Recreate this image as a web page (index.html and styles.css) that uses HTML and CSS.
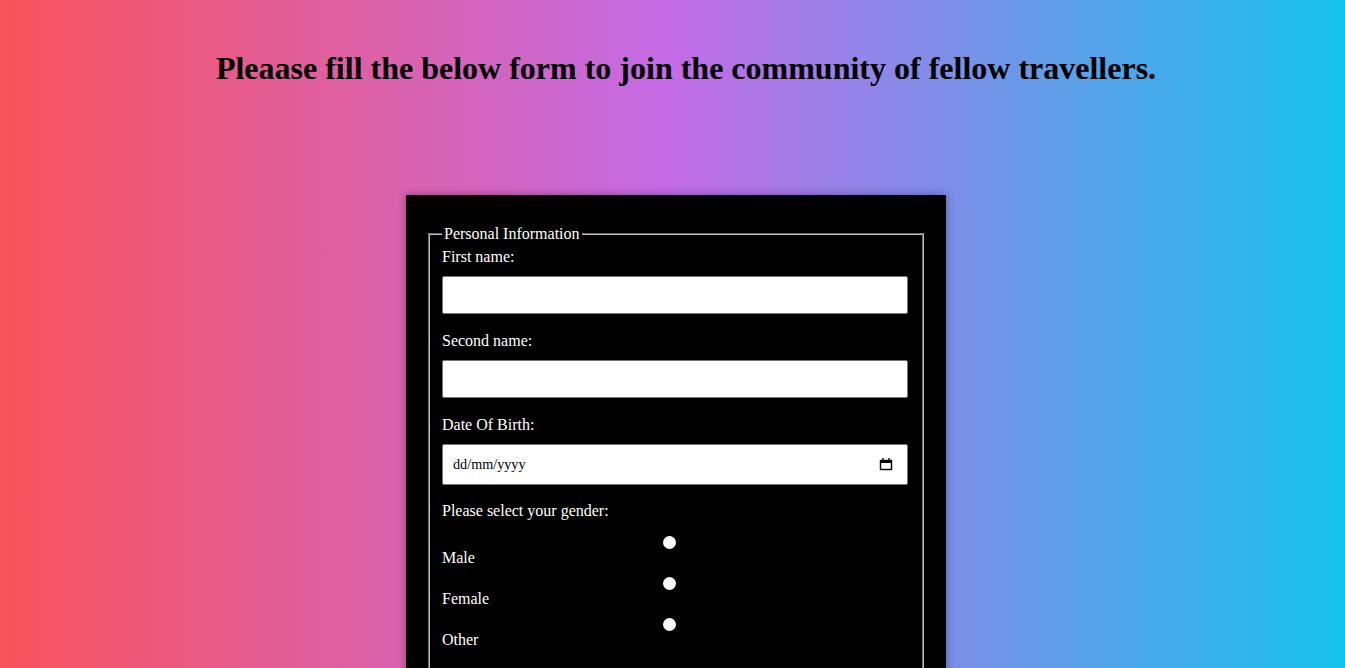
FILE: index.html
```html
<!DOCTYPE html>
<html lang="en-GB">
<head>
<meta charset="utf-8">
<title>Join the community</title>
<link rel="stylesheet" href="styles.css">
</head>
<body>
  <h1 class="title">Pleaase fill the below form to join the community of fellow travellers.</h1>
  <div class="wrap">
    <form class="form">
      <fieldset class="group">
        <legend class="legend">Personal Information</legend>
        <label class="lbl" for="fn">First name:</label>
        <input class="field" type="text" id="fn">
        <label class="lbl" for="sn">Second name:</label>
        <input class="field" type="text" id="sn">
        <label class="lbl" for="dob">Date Of Birth:</label>
        <div class="date-box">
          <input class="date-input" type="text" id="dob" placeholder="dd/mm/yyyy">
          <svg class="cal" width="14" height="14" viewBox="0 0 14 14" aria-hidden="true">
            <rect x="1.5" y="3.5" width="11" height="9" fill="none" stroke="#000" stroke-width="1.4"/>
            <rect x="1" y="3" width="12" height="3" fill="#000"/>
            <rect x="3.3" y="1" width="1.4" height="2.5" fill="#000"/>
            <rect x="9.3" y="1" width="1.4" height="2.5" fill="#000"/>
          </svg>
        </div>
        <p class="lbl gender">Please select your gender:</p>
        <div class="radio-row">
          <label class="rlbl" for="m">Male</label>
          <input class="radio" type="radio" name="g" id="m">
        </div>
        <div class="radio-row">
          <label class="rlbl" for="f">Female</label>
          <input class="radio" type="radio" name="g" id="f">
        </div>
        <div class="radio-row">
          <label class="rlbl" for="o">Other</label>
          <input class="radio" type="radio" name="g" id="o">
        </div>
      </fieldset>
    </form>
  </div>
</body>
</html>
```

FILE: styles.css
```css
html, body {
  margin: 0;
  padding: 0;
}
body {
  font-family: "Liberation Serif", "Times New Roman", serif;
  background: linear-gradient(to right, #f9535a 0%, #c46be7 50%, #15c2ea 100%);
  min-height: 100vh;
  padding: 8px;
  box-sizing: border-box;
}
.title {
  font-size: 32px;
  font-weight: bold;
  text-align: center;
  margin: 42px 0 0 0;
  padding-left: 27px;
  color: #000;
  line-height: 37px;
}
.wrap {
  display: flex;
  justify-content: center;
  padding-left: 7px;
  margin-top: 108px;
}
.form {
  width: 540px;
  box-sizing: border-box;
  background: #000;
  padding: 30px 20px 40px;
  box-shadow: 0 0 8px rgba(0, 0, 0, 0.35);
  color: #fff;
}
.group {
  margin: 0 2px;
  padding: 4.6px 12px 60px;
  border: 2px groove #c0c0c0;
}
.legend {
  padding: 0 2px;
  font-size: 16px;
  color: #fff;
}
.lbl {
  display: block;
  font-size: 16px;
  margin: 0;
  color: #fff;
}
.field {
  display: block;
  width: 466px;
  height: 38px;
  box-sizing: border-box;
  margin: 10px 0 18px;
  padding: 10px;
  border: 1px solid #767676;
  border-radius: 2px;
  background: #fff;
  font-family: "Liberation Serif", "Times New Roman", serif;
  font-size: 13.33px;
  color: #000;
}
.date-box {
  display: flex;
  align-items: center;
  width: 466px;
  height: 41px;
  box-sizing: border-box;
  margin: 10px 0 17px;
  padding: 0 14px 0 10px;
  border: 1px solid #767676;
  border-radius: 2px;
  background: #fff;
}
.date-input {
  flex: 1;
  min-width: 0;
  border: none;
  outline: none;
  padding: 0;
  margin: 0;
  background: transparent;
  font-family: "Liberation Serif", "Times New Roman", serif;
  font-size: 14.2px;
  color: #000;
}
.date-input::placeholder {
  color: #000;
  opacity: 1;
}
.cal {
  flex: none;
  display: block;
}
.gender {
  margin-bottom: 6px;
}
.radio-row {
  display: flex;
  height: 41px;
}
.rlbl {
  align-self: flex-end;
  width: 221px;
  font-size: 16px;
  line-height: 18px;
  color: #fff;
}
.radio {
  appearance: none;
  -webkit-appearance: none;
  align-self: flex-start;
  width: 13px;
  height: 13px;
  margin: 10px 0 0 0;
  border-radius: 50%;
  background: #fff;
  border: none;
}
```
